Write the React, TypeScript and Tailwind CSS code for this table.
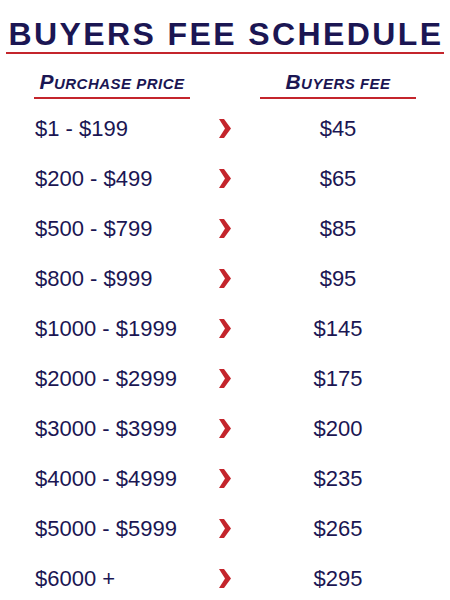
const rows: [string, string][] = [
  ['$1 - $199', '$45'],
  ['$200 - $499', '$65'],
  ['$500 - $799', '$85'],
  ['$800 - $999', '$95'],
  ['$1000 - $1999', '$145'],
  ['$2000 - $2999', '$175'],
  ['$3000 - $3999', '$200'],
  ['$4000 - $4999', '$235'],
  ['$5000 - $5999', '$265'],
  ['$6000 +', '$295'],
]

function Chevron() {
  return (
    <svg width="12" height="19" viewBox="0 0 12 19" className="block">
      <polygon points="0,0 5,0 12,9.5 5,19 0,19 6,9.5" fill="#c4252c" />
    </svg>
  )
}

function Head({ first, rest }: { first: string; rest: string }) {
  return (
    <div className="font-bold italic text-[#1b1653] tracking-[0.5px] leading-[24px]">
      <span className="text-[21px]">{first}</span>
      <span className="text-[15px]">{rest}</span>
    </div>
  )
}

export default function App() {
  return (
    <div className="w-[450px] h-[600px] bg-white font-['Liberation_Sans',Arial,sans-serif] text-[#1b1653] overflow-hidden">
      <div className="pt-[16px] px-[6px]">
        <h1 className="whitespace-nowrap text-center text-[32px] leading-[36px] font-bold tracking-[2.4px] pl-[2px]">BUYERS FEE SCHEDULE</h1>
        <div className="h-[2px] bg-[#c4252c]" />
      </div>
      <div className="flex mt-[16px]">
        <div className="ml-[34px] w-[156px] flex flex-col items-center">
          <Head first="P" rest="URCHASE PRICE" />
          <div className="w-full h-[2px] bg-[#c4252c] mt-[1px]" />
        </div>
        <div className="ml-[70px] w-[156px] flex flex-col items-center">
          <Head first="B" rest="UYERS FEE" />
          <div className="w-full h-[2px] bg-[#c4252c] mt-[1px]" />
        </div>
      </div>
      <div className="mt-[4px]">
        {rows.map(([price, fee]) => (
          <div key={price} className="flex items-center h-[50px] text-[22px]">
            <div className="ml-[35px] w-[184px]">{price}</div>
            <Chevron />
            <div className="w-[214px] text-center">{fee}</div>
          </div>
        ))}
      </div>
    </div>
  )
}
